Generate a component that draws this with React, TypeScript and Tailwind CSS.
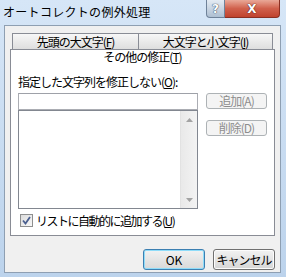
export default function App() {
  return (
    <div className="w-[286px] h-[277px] flex flex-col bg-gradient-to-b from-[#d6e6f7] to-[#bcd3ec] font-['Noto_Sans_CJK_JP','Noto_Sans',sans-serif] text-black select-none">
      {/* Title bar */}
      <div className="h-[25px] flex items-start">
        <div className="pl-[3px] pt-[5px] text-[12px] leading-[14px] tracking-[0.3px]">オートコレクトの例外処理</div>
        <div className="ml-auto mr-[6px] flex">
          <div className="w-[19px] h-[18px] rounded-bl-[4px] border border-t-0 border-[#6f8299] bg-gradient-to-b from-[#e4ebf3] via-[#c9d5e2] to-[#aebfd2] flex items-center justify-center text-white font-bold text-[12px] leading-none font-['DejaVu_Sans',sans-serif] [text-shadow:0_0_1px_#2a3a55,0_0_1px_#2a3a55]">
            ?
          </div>
          <div className="w-[55px] h-[18px] rounded-br-[4px] border border-t-0 border-l-0 border-[#8a2f22] bg-gradient-to-b from-[#e9a898] via-[#d0604c] to-[#c0432e] flex items-center justify-center text-white font-bold text-[12px] leading-none font-['DejaVu_Sans',sans-serif] [text-shadow:0_0_1px_#4a120a,0_0_1px_#4a120a]">
            X
          </div>
        </div>
      </div>

      {/* Client area */}
      <div className="ml-[4px] mr-[5px] mb-[4px] flex-1 border border-[#8e9fb2] bg-[#f0f0f0] flex flex-col text-[12px] leading-[14px] tracking-[-1px]">
        {/* Tab control */}
        <div className="mx-[5px] mt-[7px] flex flex-col">
          <div className="flex px-[2px] h-[16px]">
            <div className="w-[127px] border border-b-0 border-[#898c95] bg-gradient-to-b from-[#f7f7f7] to-[#dedede] flex items-center justify-center">
              先頭の大文字(<span className="underline">F</span>)
            </div>
            <div className="flex-1 border border-b-0 border-l-0 border-[#898c95] bg-gradient-to-b from-[#f7f7f7] to-[#dedede] flex items-center justify-center">
              大文字と小文字(<span className="underline">I</span>)
            </div>
          </div>
          <div className="border border-[#898c95] bg-white flex flex-col">
            <div className="h-[14px] flex items-center justify-center">
              その他の修正(<span className="underline">T</span>)
            </div>
            <div className="pt-[11px] pl-[7px] pr-[7px] pb-[8px] flex flex-col">
              <div className="flex">
                <div className="w-[180px] flex flex-col">
                  <div className="h-[14px]">
                    指定した文字列を修正しない(<span className="underline">O</span>):
                  </div>
                  <div className="mt-[4px] h-[17px] border border-[#abadb3] border-t-[#9ea1a8] bg-white" />
                  <div className="h-[99px] border border-[#828790] bg-white flex justify-end">
                    <div className="w-[17px] bg-gradient-to-r from-[#e9e9e9] to-[#f3f3f3] border-l border-[#e2e2e2] flex flex-col justify-between">
                      <div className="h-[17px] flex items-center justify-center">
                        <svg width="7" height="4" viewBox="0 0 7 4">
                          <path d="M0 4 L3.5 0 L7 4 Z" fill="#a3a3a3" />
                        </svg>
                      </div>
                      <div className="h-[17px] flex items-center justify-center">
                        <svg width="7" height="4" viewBox="0 0 7 4">
                          <path d="M0 0 L3.5 4 L7 0 Z" fill="#a3a3a3" />
                        </svg>
                      </div>
                    </div>
                  </div>
                </div>
                <div className="ml-[8px] pt-[18px] flex flex-col gap-[11px]">
                  <div className="w-[61px] h-[16px] rounded-[3px] border border-[#adb2b5] bg-[#f4f4f4] text-[#8d8d8d] flex items-center justify-center">
                    追加(A)
                  </div>
                  <div className="w-[61px] h-[16px] rounded-[3px] border border-[#adb2b5] bg-[#f4f4f4] text-[#8d8d8d] flex items-center justify-center">
                    削除(D)
                  </div>
                </div>
              </div>
              <div className="mt-[5px] h-[13px] flex items-center">
                <div className="ml-[2px] w-[13px] h-[13px] border border-[#8e8f8f] bg-gradient-to-br from-[#dcdcdc] to-[#f8f8f8] flex items-center justify-center">
                  <svg width="9" height="9" viewBox="0 0 9 9">
                    <path d="M1 4.5 L3.5 7.5 L8 1" fill="none" stroke="#4a5f8f" strokeWidth="1.8" />
                  </svg>
                </div>
                <div className="ml-[3px] tracking-[-1.5px]">
                  リストに自動的に追加する(<span className="underline">U</span>)
                </div>
              </div>
            </div>
          </div>
        </div>

        {/* Dialog buttons */}
        <div className="mt-[13px] mr-[5px] flex justify-end gap-[8px]">
          <div className="w-[62px] h-[21px] rounded-[3px] border border-[#3c7fb1] shadow-[inset_0_0_0_1px_#8fdcf9] bg-gradient-to-b from-[#f2f2f2] to-[#d8d8d8] flex items-center justify-center tracking-normal">
            OK
          </div>
          <div className="w-[62px] h-[21px] rounded-[3px] border border-[#707070] shadow-[inset_0_0_0_1px_#fcfcfc] bg-gradient-to-b from-[#f2f2f2] to-[#d6d6d6] flex items-center justify-center">
            キャンセル
          </div>
        </div>
      </div>
    </div>
  );
}
